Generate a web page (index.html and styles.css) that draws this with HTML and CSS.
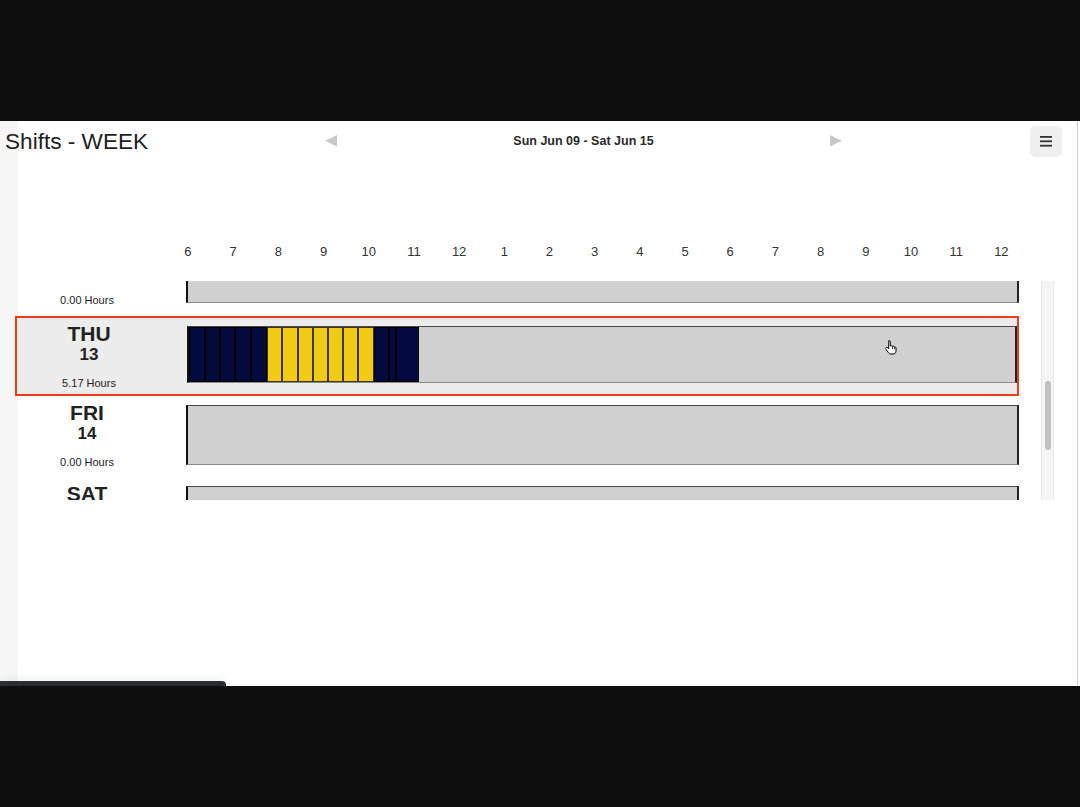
FILE: index.html
```html
<!DOCTYPE html>
<html lang="en">
<head>
    <meta charset="UTF-8">
    <title>Shifts - WEEK</title>
    <link rel="stylesheet" href="styles.css">
</head>
<body>
    <div class="band"></div>
    <div class="screen">
        <header class="top">
            <h1 class="title">Shifts - WEEK</h1>
            <nav class="week-nav">
                <svg class="arrow" width="12" height="12" viewBox="0 0 12 12"><polygon points="12,0 12,11.5 0,5.75" /></svg>
                <span class="range">Sun Jun 09 - Sat Jun 15</span>
                <svg class="arrow" width="12" height="12" viewBox="0 0 12 12"><polygon points="0,0 0,11.5 12,5.75" /></svg>
            </nav>
            <button class="menu-btn" type="button" aria-label="Menu">
                <svg width="12" height="12" viewBox="0 0 12 12"><rect x="0" y="1" width="12" height="1.8" /><rect x="0" y="5.4" width="12" height="1.8" /><rect x="0" y="9.8" width="12" height="1.8" /></svg>
            </button>
        </header>

        <div class="hours">
            <span>6</span><span>7</span><span>8</span><span>9</span><span>10</span><span>11</span><span>12</span>
            <span>1</span><span>2</span><span>3</span><span>4</span><span>5</span><span>6</span><span>7</span>
            <span>8</span><span>9</span><span>10</span><span>11</span><span>12</span>
        </div>

        <div class="scroller">
            <div class="viewport">
                <div class="days">
                    <div class="day">
                        <div class="day-label">
                            <div class="dow">WED</div>
                            <div class="num">12</div>
                            <div class="total">0.00 Hours</div>
                        </div>
                        <div class="bar"></div>
                    </div>

                    <div class="day selected">
                        <div class="day-label">
                            <div class="dow">THU</div>
                            <div class="num">13</div>
                            <div class="total">5.17 Hours</div>
                        </div>
                        <div class="bar">
                            <div class="seg navy" style="width:16px"></div>
                            <div class="seg navy" style="width:15px"></div>
                            <div class="seg navy" style="width:15px"></div>
                            <div class="seg navy" style="width:16px"></div>
                            <div class="seg navy" style="width:16px"></div>
                            <div class="seg gold" style="width:15px"></div>
                            <div class="seg gold" style="width:16px"></div>
                            <div class="seg gold" style="width:15px"></div>
                            <div class="seg gold" style="width:15px"></div>
                            <div class="seg gold" style="width:15px"></div>
                            <div class="seg gold" style="width:15px"></div>
                            <div class="seg gold" style="width:16px"></div>
                            <div class="seg navy" style="width:15px"></div>
                            <div class="seg navy" style="width:7px"></div>
                            <div class="seg navy" style="width:23px"></div>
                            <svg class="cursor" width="16" height="17" viewBox="0 0 16 17">
                                <path d="M6 1.5c.8 0 1.3.6 1.3 1.3V7h.2c.6-.4 1.6-.3 2 .3.6-.3 1.5-.1 1.9.5.7-.2 1.6.2 1.6 1.1V12c0 1.8-1.2 3-3 3H7.8c-1 0-1.8-.5-2.4-1.3L3 10.3c-.5-.7-.3-1.5.4-1.8.6-.3 1.2 0 1.6.5l.7.9V2.8C5.7 2.1 5.2 1.5 6 1.5z" />
                                <path class="knuckle" d="M9.5 7.3v2.6M11.4 7.8v2.3" />
                            </svg>
                        </div>
                    </div>

                    <div class="day">
                        <div class="day-label">
                            <div class="dow">FRI</div>
                            <div class="num">14</div>
                            <div class="total">0.00 Hours</div>
                        </div>
                        <div class="bar"></div>
                    </div>

                    <div class="day">
                        <div class="day-label">
                            <div class="dow">SAT</div>
                            <div class="num">15</div>
                            <div class="total">0.00 Hours</div>
                        </div>
                        <div class="bar"></div>
                    </div>
                </div>
            </div>
            <div class="track"><div class="thumb"></div></div>
        </div>

        <div class="tab"></div>
    </div>
</body>
</html>
```

FILE: styles.css
```css
body {
    margin: 0;
    padding: 0;
    background: #0e0e0e;
    font-family: 'Liberation Sans', Arial, sans-serif;
    color: #222;
}
.band {
    height: 121px;
}
.screen {
    height: 565px;
    display: flex;
    flex-direction: column;
    background: linear-gradient(to right, #f6f6f6 0 18px, #fff 18px 1077px, #cfcfcf 1077px 1078px, #fff 1078px);
}
.top {
    height: 40px;
    display: grid;
    grid-template-columns: 325px 517px 1fr;
    align-items: center;
}
.title {
    margin: 0;
    padding: 2px 0 0 5px;
    font-size: 22.6px;
    font-weight: normal;
    color: #1e1e1e;
    line-height: 38px;
}
.week-nav {
    display: flex;
    justify-content: space-between;
    align-items: center;
}
.arrow {
    display: block;
    fill: #c9c9c9;
}
.range {
    font-size: 12.5px;
    font-weight: bold;
    color: #2a2a2a;
}
.menu-btn {
    justify-self: end;
    margin-right: 18px;
    width: 32px;
    height: 31px;
    border: none;
    border-radius: 5px;
    background: #efefef;
    padding: 0;
    display: flex;
    align-items: center;
    justify-content: center;
}
.menu-btn svg {
    fill: #333;
}
.hours {
    display: flex;
    margin: 83px 0 0 165.4px;
    font-size: 13px;
    line-height: 16px;
    color: #333;
}
.hours span {
    width: 45.2px;
    text-align: center;
    flex: none;
}
.scroller {
    display: flex;
    margin: 21px 0 0 15px;
    gap: 22px;
    height: 219px;
}
.viewport {
    width: 1004px;
    overflow: hidden;
}
.days {
    margin-top: -46px;
}
.day {
    display: flex;
    align-items: flex-start;
    height: 80px;
    margin-bottom: 1px;
    box-sizing: border-box;
}
.day.selected {
    border: 2px solid #f23b1b;
    background: #ececec;
}
.day-label {
    width: 144px;
    flex: none;
    text-align: center;
}
.dow {
    margin-top: 6px;
    font-size: 21px;
    font-weight: bold;
    line-height: 20px;
}
.num {
    margin-top: 1px;
    font-size: 17px;
    font-weight: bold;
    line-height: 20px;
}
.total {
    margin-top: 11px;
    font-size: 11px;
    line-height: 14px;
}
.bar {
    position: relative;
    flex: 1;
    margin: 8px 0 0 27px;
    height: 75%;
    box-sizing: border-box;
    display: flex;
    background: #d0d0d0;
    border: 1px solid #4a4a4a;
    border-bottom-color: #8a8a8a;
    border-left: 2px solid #111;
    border-right: 2px solid #222;
}
.selected .bar {
    margin-left: 26px;
}
.seg {
    flex: none;
    box-sizing: border-box;
    height: 100%;
    border: 1px solid #000;
}
.seg.navy {
    background: #030b3e;
}
.seg.gold {
    background: #f1cb12;
    border-color: #3a3320;
}
.cursor {
    position: absolute;
    left: 694px;
    top: 12px;
}
.cursor path {
    fill: #fff;
    stroke: #000;
    stroke-width: 1;
}
.cursor .knuckle {
    fill: none;
    stroke-width: .8;
}
.track {
    width: 13px;
    box-sizing: border-box;
    background: #f5f5f5;
    border-left: 1px solid #e8e8e8;
    border-right: 1px solid #e8e8e8;
    padding-top: 100px;
}
.thumb {
    width: 6px;
    height: 69px;
    margin: 0 auto;
    border-radius: 3px;
    background: #c2c2c2;
}
.tab {
    margin-top: auto;
    width: 226px;
    height: 5px;
    background: #2c2d31;
    border-top-right-radius: 4px;
    box-shadow: 0 -3px 8px rgba(0,0,0,0.08);
}
```
